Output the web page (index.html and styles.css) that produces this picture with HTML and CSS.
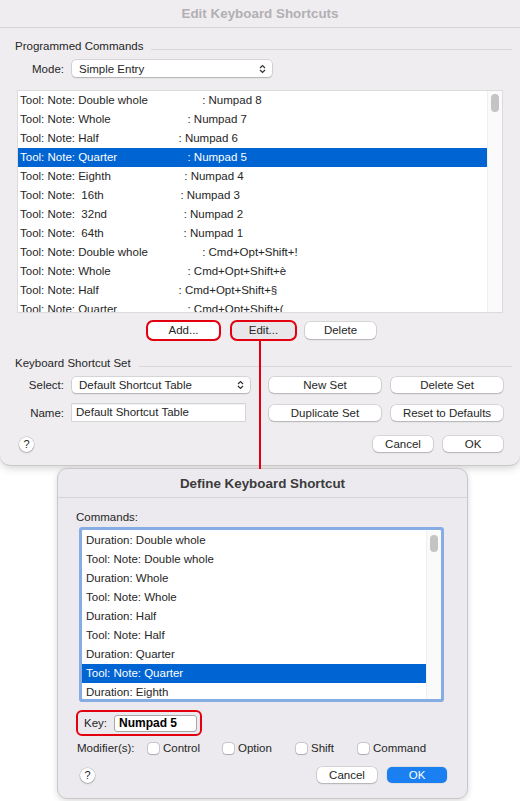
FILE: index.html
```html
<!DOCTYPE html>
<html>
<head>
<meta charset="utf-8">
<link rel="stylesheet" href="styles.css">
</head>
<body>
<div class="win">
  <div class="titlebar">Edit Keyboard Shortcuts</div>
  <div class="wbody">
    <div class="sec"><span>Programmed Commands</span><span class="rule"></span></div>
    <div class="frow">
      <span class="lbl">Mode:</span>
      <div class="popup w200"><span>Simple Entry</span><svg class="chev" width="7" height="10" viewBox="0 0 7 10"><path d="M1 4 L3.5 1.5 L6 4 M1 6 L3.5 8.5 L6 6" fill="none" stroke="#333" stroke-width="1.2"/></svg></div>
    </div>
    <div class="list main-list">
      <div class="rows">
        <div class="row">Tool: Note: Double whole                 : Numpad 8</div>
        <div class="row">Tool: Note: Whole                        : Numpad 7</div>
        <div class="row">Tool: Note: Half                         : Numpad 6</div>
        <div class="row sel">Tool: Note: Quarter                      : Numpad 5</div>
        <div class="row">Tool: Note: Eighth                       : Numpad 4</div>
        <div class="row">Tool: Note:  16th                        : Numpad 3</div>
        <div class="row">Tool: Note:  32nd                        : Numpad 2</div>
        <div class="row">Tool: Note:  64th                         : Numpad 1</div>
        <div class="row">Tool: Note: Double whole                 : Cmd+Opt+Shift+!</div>
        <div class="row">Tool: Note: Whole                        : Cmd+Opt+Shift+è</div>
        <div class="row">Tool: Note: Half                         : Cmd+Opt+Shift+§</div>
        <div class="row">Tool: Note: Quarter                      : Cmd+Opt+Shift+(</div>
      </div>
      <div class="sbar"><div class="thumb"></div></div>
    </div>
    <div class="btnrow">
      <div class="btn hl b-add">Add...</div>
      <div class="btn hl b-edit pressed">Edit...</div>
      <div class="btn b-del">Delete</div>
    </div>
    <div class="sec sec2"><span>Keyboard Shortcut Set</span><span class="rule"></span></div>
    <div class="setgrid">
      <span class="lbl c1">Select:</span>
      <div class="popup c3"><span>Default Shortcut Table</span><svg class="chev" width="7" height="10" viewBox="0 0 7 10"><path d="M1 4 L3.5 1.5 L6 4 M1 6 L3.5 8.5 L6 6" fill="none" stroke="#333" stroke-width="1.2"/></svg></div>
      <div class="btn c5">New Set</div>
      <div class="btn c7">Delete Set</div>
      <span class="lbl c1">Name:</span>
      <div class="field c3">Default Shortcut Table</div>
      <div class="btn c5">Duplicate Set</div>
      <div class="btn c7">Reset to Defaults</div>
    </div>
    <div class="bottom wbottom">
      <div class="help">?</div>
      <div class="spacer"></div>
      <div class="btn b-60">Cancel</div>
      <div class="btn b-60">OK</div>
    </div>
  </div>
</div>

<div class="connector"></div>

<div class="dlg">
  <div class="dtitle">Define Keyboard Shortcut</div>
  <div class="dbody">
    <div class="dlabel">Commands:</div>
    <div class="list dlist">
      <div class="rows">
        <div class="row">Duration: Double whole</div>
        <div class="row">Tool: Note: Double whole</div>
        <div class="row">Duration: Whole</div>
        <div class="row">Tool: Note: Whole</div>
        <div class="row">Duration: Half</div>
        <div class="row">Tool: Note: Half</div>
        <div class="row">Duration: Quarter</div>
        <div class="row sel">Tool: Note: Quarter</div>
        <div class="row">Duration: Eighth</div>
      </div>
      <div class="sbar"><div class="thumb"></div></div>
    </div>
    <div class="keyrow">
      <span class="keylbl">Key:</span>
      <div class="keyfield">Numpad 5</div>
    </div>
    <div class="mods">
      <span>Modifier(s):</span>
      <label class="cb"><span class="box"></span>Control</label>
      <label class="cb"><span class="box"></span>Option</label>
      <label class="cb"><span class="box"></span>Shift</label>
      <label class="cb"><span class="box"></span>Command</label>
    </div>
    <div class="bottom dbottom">
      <div class="help">?</div>
      <div class="spacer"></div>
      <div class="btn b-60">Cancel</div>
      <div class="btn b-60 primary">OK</div>
    </div>
  </div>
</div>
</body>
</html>
```

FILE: styles.css
```css
html, body {
  margin: 0;
  padding: 0;
}
body {
  width: 520px;
  height: 801px;
  overflow: hidden;
  position: relative;
  background: #ffffff;
  font-family: "Liberation Sans", Arial, sans-serif;
  font-size: 11.5px;
  color: #262626;
}

/* main window */
.win {
  width: 520px;
  height: 465px;
  background: #efedf0;
  border-radius: 0 0 10px 10px;
  box-shadow: 0 1px 0 #cbc9cc, 0 3px 8px rgba(0, 0, 0, 0.18);
}
.titlebar {
  height: 27px;
  border-bottom: 1px solid #d5d3d6;
  display: flex;
  align-items: center;
  justify-content: center;
  font-weight: bold;
  font-size: 13.4px;
  color: #b2b0b3;
}
.wbody {
  padding: 0 8px 0 15px;
}
.sec {
  display: flex;
  margin-top: 11px;
  height: 14px;
  line-height: 14px;
}
.sec .rule {
  flex: 1;
  height: 1px;
  background: #d8d6d9;
  margin-top: 10px;
  margin-left: 8px;
}
.sec2 {
  margin-top: 17px;
}
.frow {
  display: flex;
  align-items: center;
  height: 17px;
  margin-top: 7px;
}
.lbl {
  width: 49px;
  text-align: right;
  margin-right: 8px;
}
.popup {
  height: 16px;
  background: #fff;
  border-radius: 4px;
  box-shadow: 0 0 0 0.5px rgba(0, 0, 0, 0.2), 0 1px 1.5px rgba(0, 0, 0, 0.18);
  display: flex;
  align-items: center;
  justify-content: space-between;
  padding: 0 6px 0 7px;
  box-sizing: border-box;
}
.w200 {
  width: 200px;
  height: 17px;
}
.chev {
  display: block;
}

/* lists */
.list {
  background: #fff;
  box-sizing: border-box;
  display: flex;
  overflow: hidden;
}
.main-list {
  margin: 13px 0 0 2px;
  width: 486px;
  height: 223px;
  border: 1px solid #dcdadd;
}
.rows {
  flex: 1;
  min-width: 0;
}
.row {
  height: 19px;
  line-height: 18px;
  padding-left: 2px;
  white-space: pre;
  overflow: hidden;
}
.row.sel {
  background: #0064d2;
  color: #fff;
}
.sbar {
  width: 15px;
  background: #fafafa;
  border-left: 1px solid #efefef;
  box-sizing: border-box;
}
.thumb {
  width: 8px;
  height: 18px;
  margin: 3px 0 0 3px;
  border-radius: 4px;
  background: #c4c4c4;
}

/* buttons */
.btn {
  height: 16px;
  line-height: 16px;
  background: #fff;
  border-radius: 5px;
  box-shadow: 0 0 0 0.5px rgba(0, 0, 0, 0.2), 0 1px 1.5px rgba(0, 0, 0, 0.16);
  text-align: center;
  box-sizing: border-box;
  white-space: nowrap;
}
.btnrow {
  display: flex;
  margin-top: 9px;
  padding-left: 133px;
}
.btnrow .btn {
  height: 17px;
  line-height: 17px;
}
.b-add {
  width: 71px;
}
.b-edit {
  width: 63px;
  margin-left: 13px;
}
.b-del {
  width: 71px;
  margin-left: 10px;
}
.pressed {
  background: #e8e6e9;
}
.hl {
  outline: 2px solid #e3000f;
  outline-offset: 0;
}

.setgrid {
  display: grid;
  grid-template-columns: 49px 8px 178px 19px 112px 10px 112px;
  grid-template-rows: 16px 17px;
  row-gap: 11px;
  margin-top: 7px;
  align-items: center;
}
.setgrid .lbl {
  width: auto;
  margin-right: 0;
}
.c1 { grid-column: 1; }
.c3 { grid-column: 3; }
.c5 { grid-column: 5; }
.c7 { grid-column: 7; }
.setgrid .btn {
  height: 16px;
}
.field {
  width: 173px;
  height: 17px;
  line-height: 17px;
  background: #fff;
  box-shadow: 0 0 0 0.5px rgba(0, 0, 0, 0.22), inset 0 0.5px 0 rgba(0, 0, 0, 0.1);
  padding-left: 4px;
  box-sizing: border-box;
}

.bottom {
  display: flex;
  align-items: center;
  margin-top: 15px;
  height: 16px;
}
.wbottom {
  margin-right: 9px;
}
.spacer {
  flex: 1;
}
.b-60 {
  width: 60px;
  margin-left: 10px;
}
.help {
  width: 15px;
  height: 15px;
  border-radius: 50%;
  background: #fff;
  box-shadow: 0 0 0 0.5px rgba(0, 0, 0, 0.2), 0 1px 1.5px rgba(0, 0, 0, 0.2);
  margin-left: 4px;
  font-size: 11px;
  line-height: 15px;
  text-align: center;
}

/* connector annotation */
.connector {
  position: absolute;
  left: 259px;
  top: 341px;
  width: 2px;
  height: 128px;
  background: #e3000f;
}

/* define dialog */
.dlg {
  margin: 3px 0 0 57px;
  width: 411px;
  height: 331px;
  box-sizing: border-box;
  border: 1px solid #c9c7ca;
  border-radius: 10px;
  background: #eceaee;
  box-shadow: 0 2px 6px rgba(0, 0, 0, 0.15);
}
.dtitle {
  height: 28px;
  border-bottom: 1px solid #d5d3d6;
  display: flex;
  align-items: center;
  justify-content: center;
  font-weight: bold;
  font-size: 13.4px;
  color: #3b3b3b;
}
.dbody {
  padding: 0 20px 0 18px;
}
.dlabel {
  margin-top: 12px;
  height: 14px;
  line-height: 14px;
}
.dlist {
  margin: 6px 0 0 6px;
  width: 359px;
  height: 169px;
  padding-top: 1px;
  box-shadow: 0 0 0 3px #85ade3;
  border-radius: 1px;
}
.dlist .row {
  padding-left: 4px;
}
.dlist .thumb {
  margin: 4px 0 0 3px;
  height: 17px;
}
.keyrow {
  margin: 13px 0 0 2px;
  width: 122px;
  height: 22px;
  box-sizing: border-box;
  outline: 2px solid #e3000f;
  border-radius: 4px;
  display: flex;
  align-items: center;
  padding-left: 6px;
}
.keylbl {
  width: 30px;
}
.keyfield {
  width: 83px;
  height: 17px;
  line-height: 15px;
  box-sizing: border-box;
  border: 1px solid #a8a8a8;
  border-radius: 3px;
  background: #fff;
  font-weight: bold;
  font-size: 12px;
  color: #000;
  padding-left: 4px;
}
.mods {
  display: grid;
  grid-template-columns: 71px 75px 73px 62px auto;
  margin: 7px 0 0 1px;
  height: 14px;
  line-height: 14px;
  align-items: center;
}
.cb {
  display: flex;
  align-items: center;
}
.box {
  width: 11px;
  height: 11px;
  box-sizing: border-box;
  background: #fff;
  border-radius: 3px;
  box-shadow: 0 0 0 0.5px rgba(0, 0, 0, 0.28), 0 0.5px 1px rgba(0, 0, 0, 0.15);
  margin-right: 4px;
}
.dbottom {
  margin-top: 12px;
}
.primary {
  background: #1a80f2;
  color: #fff;
  box-shadow: 0 0 0 0.5px rgba(0, 0, 0, 0.1);
}
```
